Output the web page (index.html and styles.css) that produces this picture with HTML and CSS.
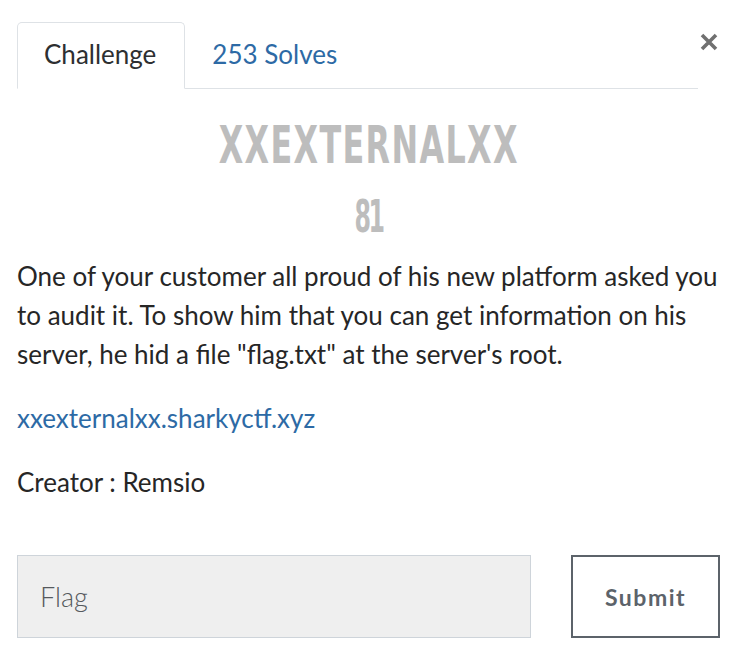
FILE: index.html
```html
<!DOCTYPE html>
<html lang="en">
<head>
    <meta charset="UTF-8">
    <meta name="viewport" content="width=device-width, initial-scale=1.0">
    <title>Challenge</title>
    <link rel="stylesheet" href="styles.css">
</head>
<body>
    <div class="modal">
        <!-- tabs + close -->
        <div class="modal-head">
            <ul class="tabs">
                <li class="tab active">Challenge</li>
                <li class="tab"><a href="#">253 Solves</a></li>
            </ul>
            <button class="close" aria-label="Close">
                <svg width="18" height="18" viewBox="0 0 18 18">
                    <path d="M2 2 L16 16 M16 2 L2 16" stroke="#707070" stroke-width="3.6" stroke-linecap="butt"/>
                </svg>
            </button>
        </div>

        <h2 class="chal-name"><span>XXEXTERNALXX</span></h2>
        <h3 class="chal-value"><span>81</span></h3>

        <div class="chal-desc">
            <p>One of your customer all proud of his new platform asked you to audit it. To show him that you can get information on his server, he hid a file "flag.txt" at the server's root.</p>
            <p><a href="#">xxexternalxx.sharkyctf.xyz</a></p>
            <p>Creator : Remsio</p>
        </div>

        <!-- flag form -->
        <div class="submit-row">
            <input class="flag-input" type="text" placeholder="Flag">
            <button class="submit-btn">Submit</button>
        </div>
    </div>
</body>
</html>
```
FILE: styles.css
```css
body {
    margin: 0;
    padding: 0;
    background-color: #ffffff;
    font-family: 'Lato', 'Open Sans', sans-serif;
    color: #212529;
}

.modal {
    width: 703px;
    padding: 22px 0 0 17px;
}

.modal-head {
    display: flex;
    align-items: flex-start;
}

.tabs {
    list-style: none;
    margin: 0;
    padding: 0;
    display: flex;
    width: 681px;
    border-bottom: 1px solid #dee2e6;
}

.tab {
    font-size: 26px;
    line-height: 30px;
    padding: 16px 28px 19px 26px;
    margin-bottom: -1px;
    border: 1px solid transparent;
    border-radius: 5px 5px 0 0;
}

.tab.active {
    border-color: #dee2e6 #dee2e6 #ffffff;
    color: #2d2f31;
}

.tab a {
    color: #2d6aa5;
    text-decoration: none;
}

.close {
    background: none;
    border: none;
    padding: 0;
    margin: 11px 0 0 2px;
    width: 18px;
    height: 18px;
    line-height: 0;
    cursor: pointer;
}

.chal-name,
.chal-value {
    text-align: center;
    font-family: 'DejaVu Sans Condensed', 'DejaVu Sans', sans-serif;
    font-weight: bold;
    color: #bdbdbd;
}

.chal-name span,
.chal-value span {
    display: inline-block;
}

.chal-name {
    margin: 28px 0 0;
    font-size: 52px;
    line-height: 56px;
}

.chal-name span {
    letter-spacing: 2px;
    transform: scaleX(0.68);
}

.chal-value {
    margin: 20px 0 0;
    font-size: 44px;
    line-height: 48px;
}

.chal-value span {
    letter-spacing: -4px;
    transform: scaleX(0.6);
}

.chal-desc {
    padding-top: 16px;
}

.chal-desc p {
    margin: 0 0 25px;
    font-size: 26px;
    line-height: 39px;
    color: #262626;
}

.chal-desc p:last-child {
    margin-bottom: 0;
}

.chal-desc a {
    color: #2d6aa5;
    text-decoration: none;
}

.submit-row {
    display: flex;
    justify-content: space-between;
    margin-top: 53px;
}

.flag-input {
    width: 514px;
    height: 83px;
    box-sizing: border-box;
    padding: 0 22px;
    background-color: #efefef;
    border: 1px solid #ced4da;
    font-family: 'Lato', sans-serif;
    font-size: 27px;
    font-weight: 300;
    color: #495057;
}

.flag-input::placeholder {
    color: #55595d;
}

.submit-btn {
    width: 149px;
    height: 83px;
    background-color: #ffffff;
    border: 2px solid #5c636a;
    font-family: 'Lato', sans-serif;
    font-size: 23px;
    font-weight: bold;
    letter-spacing: 1.5px;
    color: #5c636a;
    cursor: pointer;
}
```
